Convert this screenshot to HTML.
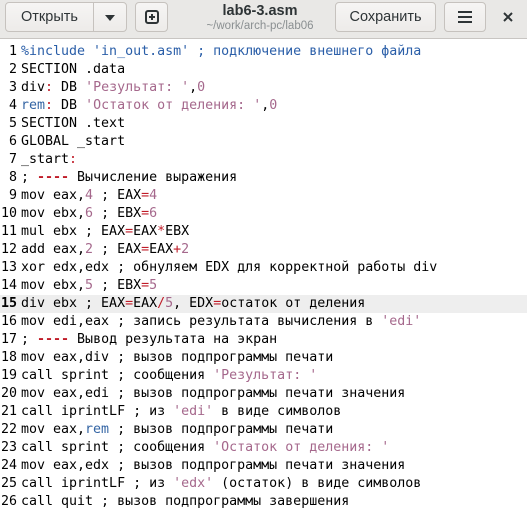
<!DOCTYPE html><html><head><meta charset="utf-8"><style>
body{margin:0;width:527px;height:516px;overflow:hidden;background:#fff;font-family:"Liberation Sans","DejaVu Sans",sans-serif}
.hb{position:absolute;left:0;top:0;width:527px;height:38px;background:#e9e8e6;border-bottom:1px solid #c8c5c2}
.b{position:absolute;top:2px;height:30px;border:1px solid #c6c2be;border-radius:4px;background:linear-gradient(#f6f5f4,#edebe9);box-sizing:border-box;font-size:14.5px;color:#2e3436;text-align:center;line-height:28px}
.t{position:absolute;left:190px;width:140px;text-align:center}
pre{position:absolute;left:0;top:43px;margin:0;font-family:"DejaVu Sans Mono",monospace;font-size:13.3px;line-height:18px;color:#000}
.l{display:block;height:18px;width:527px}
.n{display:inline-block;width:17px;text-align:right;color:#000;margin-right:4px}
.hl{background:#eeeeee}
.s{color:#a5688c}.k{color:#3465a4}.r{color:#c01c28}.c{color:#2a5ea8}
</style></head><body>
<div class="hb">
<div class="b" style="left:5px;width:89px;border-radius:4px 0 0 4px">Открыть</div>
<div class="b" style="left:93px;width:34px;border-radius:0 4px 4px 0"><svg width="12" height="8" viewBox="0 0 12 8" style="margin-top:11px;display:block;margin-left:10px"><path d="M1 1h10L6 7z" fill="#2e3436"/></svg></div>
<div class="b" style="left:135px;width:33px"><svg width="14" height="14" viewBox="0 0 14 14" style="display:block;margin:7px auto"><rect x="1" y="1" width="12" height="12" rx="2" fill="none" stroke="#2e3436" stroke-width="2"/><path d="M7 4v6M4 7h6" stroke="#2e3436" stroke-width="2"/></svg></div>
<div class="t" style="top:3px;font-size:14.5px;font-weight:bold;color:#2e3436">lab6-3.asm</div>
<div class="t" style="top:20px;font-size:11.5px;color:#8a8f91">~/work/arch-pc/lab06</div>
<div class="b" style="left:335px;width:101px">Сохранить</div>
<div class="b" style="left:444px;width:42px"><svg width="14" height="12" viewBox="0 0 14 12" style="display:block;margin:8px auto"><path d="M0 1h14M0 6h14M0 11h14" stroke="#2e3436" stroke-width="2"/></svg></div>
<svg width="10" height="10" viewBox="0 0 10 10" style="position:absolute;left:503px;top:12px"><path d="M1 1l8 8M9 1l-8 8" stroke="#2e3436" stroke-width="2"/></svg>
</div>
<pre><span class="l"><span class="n">1</span><span class="c">%include 'in_out.asm' ; подключение внешнего файла</span></span><span class="l"><span class="n">2</span>SECTION .data</span><span class="l"><span class="n">3</span>div<span class="r">:</span> DB <span class="s">'Результат: '</span>,<span class="s">0</span></span><span class="l"><span class="n">4</span><span class="k">rem</span><span class="r">:</span> DB <span class="s">'Остаток от деления: '</span>,<span class="s">0</span></span><span class="l"><span class="n">5</span>SECTION .text</span><span class="l"><span class="n">6</span>GLOBAL _start</span><span class="l"><span class="n">7</span>_start<span class="r">:</span></span><span class="l"><span class="n">8</span>; <span class="r"><b>----</b></span> Вычисление выражения</span><span class="l"><span class="n">9</span>mov eax,<span class="s">4</span> ; EAX<span class="r">=</span><span class="s">4</span></span><span class="l"><span class="n">10</span>mov ebx,<span class="s">6</span> ; EBX<span class="r">=</span><span class="s">6</span></span><span class="l"><span class="n">11</span>mul ebx ; EAX<span class="r">=</span>EAX<span class="r">*</span>EBX</span><span class="l"><span class="n">12</span>add eax,<span class="s">2</span> ; EAX<span class="r">=</span>EAX<span class="r">+</span><span class="s">2</span></span><span class="l"><span class="n">13</span>xor edx,edx ; обнуляем EDX для корректной работы div</span><span class="l"><span class="n">14</span>mov ebx,<span class="s">5</span> ; EBX<span class="r">=</span><span class="s">5</span></span><span class="l hl"><span class="n"><b>15</b></span>div ebx ; EAX<span class="r">=</span>EAX<span class="r">/</span><span class="s">5</span>, EDX<span class="r">=</span>остаток от деления</span><span class="l"><span class="n">16</span>mov edi,eax ; запись результата вычисления в <span class="s">'edi'</span></span><span class="l"><span class="n">17</span>; <span class="r"><b>----</b></span> Вывод результата на экран</span><span class="l"><span class="n">18</span>mov eax,div ; вызов подпрограммы печати</span><span class="l"><span class="n">19</span>call sprint ; сообщения <span class="s">'Результат: '</span></span><span class="l"><span class="n">20</span>mov eax,edi ; вызов подпрограммы печати значения</span><span class="l"><span class="n">21</span>call iprintLF ; из <span class="s">'edi'</span> в виде символов</span><span class="l"><span class="n">22</span>mov eax,<span class="k">rem</span> ; вызов подпрограммы печати</span><span class="l"><span class="n">23</span>call sprint ; сообщения <span class="s">'Остаток от деления: '</span></span><span class="l"><span class="n">24</span>mov eax,edx ; вызов подпрограммы печати значения</span><span class="l"><span class="n">25</span>call iprintLF ; из <span class="s">'edx'</span> (остаток) в виде символов</span><span class="l"><span class="n">26</span>call quit ; вызов подпрограммы завершения</span></pre>
</body></html>
